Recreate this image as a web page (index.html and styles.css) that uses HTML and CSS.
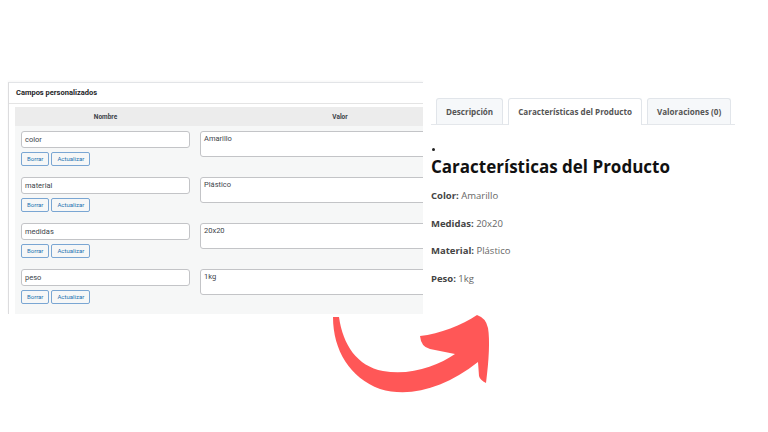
FILE: index.html
```html
<!DOCTYPE html>
<html lang="es">
<head>
    <meta charset="UTF-8">
    <meta name="viewport" content="width=device-width, initial-scale=1.0">
    <title>Campos personalizados</title>
    <link rel="stylesheet" href="styles.css">
</head>
<body>
    <div class="stage">
        <div class="admin">
            <div class="admin-head">Campos personalizados</div>
            <div class="admin-body">
                <table class="fields">
                    <thead>
                        <tr>
                            <th class="col-name">Nombre</th>
                            <th class="col-value">Valor</th>
                        </tr>
                    </thead>
                    <tbody>
                        <tr>
                            <td>
                                <div class="field-name">color</div>
                                <div class="actions">
                                    <span class="btn">Borrar</span>
                                    <span class="btn">Actualizar</span>
                                </div>
                            </td>
                            <td><div class="field-value">Amarillo</div></td>
                        </tr>
                        <tr>
                            <td>
                                <div class="field-name">material</div>
                                <div class="actions">
                                    <span class="btn">Borrar</span>
                                    <span class="btn">Actualizar</span>
                                </div>
                            </td>
                            <td><div class="field-value">Plástico</div></td>
                        </tr>
                        <tr>
                            <td>
                                <div class="field-name">medidas</div>
                                <div class="actions">
                                    <span class="btn">Borrar</span>
                                    <span class="btn">Actualizar</span>
                                </div>
                            </td>
                            <td><div class="field-value">20x20</div></td>
                        </tr>
                        <tr>
                            <td>
                                <div class="field-name">peso</div>
                                <div class="actions">
                                    <span class="btn">Borrar</span>
                                    <span class="btn">Actualizar</span>
                                </div>
                            </td>
                            <td><div class="field-value">1kg</div></td>
                        </tr>
                    </tbody>
                </table>
            </div>
        </div>

        <div class="product">
            <ul class="tabs">
                <li class="tab">Descripción</li>
                <li class="tab active">Características del Producto</li>
                <li class="tab">Valoraciones (0)</li>
            </ul>
            <div class="panel">
                <span class="dot"></span>
                <h2>Características del Producto</h2>
                <p><b>Color:</b> Amarillo</p>
                <p><b>Medidas:</b> 20x20</p>
                <p><b>Material:</b> Plástico</p>
                <p><b>Peso:</b> 1kg</p>
            </div>
        </div>

        <!-- red curved arrow -->
        <svg class="arrow" viewBox="330 312 165 88" width="165" height="88">
            <path fill="#ff5757" d="M333,317
                C333,350 350,378 380,389
                C410,398 445,388 478,362
                L479,376
                Q480,380 486,383
                C489,360 490,340 488,328
                Q486,318 477,315
                C462,325 440,334 420,336
                Q421,347 430,349
                L455,354
                C438,366 410,376 383,371
                C357,366 343,345 339,317 Z"/>
        </svg>
    </div>
</body>
</html>
```

FILE: styles.css
```css
body {
    margin: 0;
    background: #fff;
    font-family: Roboto, "Liberation Sans", sans-serif;
}
.stage {
    position: relative;
    width: 768px;
    height: 432px;
    padding-top: 82px;
    box-sizing: border-box;
    display: flex;
    align-items: flex-start;
}

/* left: admin custom fields box */
.admin {
    margin-left: 8px;
    width: 415px;
    height: 232px;
    border-left: 1px solid #dcdcde;
    border-top: 1px solid #e2e4e7;
    box-shadow: 0 -1px 2px rgba(0, 0, 0, 0.04);
    box-sizing: border-box;
    overflow: hidden;
    background: #fff;
}
.admin-head {
    height: 20px;
    line-height: 20px;
    padding-left: 7px;
    font-size: 7.5px;
    font-weight: 700;
    color: #1d2327;
    border-bottom: 1px solid #e4e4e4;
}
.admin-body {
    margin: 3px 0 0 6px;
    background: #f6f7f7;
    height: 207px;
    width: 480px;
}
.fields {
    width: 469px;
    table-layout: fixed;
    border-collapse: collapse;
}
.fields th {
    height: 19px;
    padding: 0;
    background: #ececec;
    font-size: 6.5px;
    font-weight: 700;
    color: #3c434a;
}
.fields th.col-name {
    width: 181px;
}
.fields td {
    vertical-align: top;
    padding: 11px 0 0 6px;
}
.fields td + td {
    padding-left: 4px;
}
.fields tbody tr:first-child td {
    padding-top: 5px;
}
.field-name {
    width: 169px;
    height: 17px;
    box-sizing: border-box;
    border: 1px solid #c3c4c7;
    border-radius: 3px;
    background: #fff;
    padding: 0 3px;
    line-height: 15px;
    font-size: 7.5px;
    color: #3c434a;
}
.field-value {
    height: 26px;
    box-sizing: border-box;
    border: 1px solid #c3c4c7;
    border-radius: 3px;
    background: #fff;
    padding: 2px 3px;
    font-size: 7.5px;
    color: #3c434a;
}
.actions {
    display: flex;
    gap: 2px;
    margin-top: 4px;
}
.btn {
    height: 14px;
    box-sizing: border-box;
    line-height: 12px;
    padding: 0 5px;
    border: 1px solid #7aa6d3;
    border-radius: 2px;
    background: #f6f7f7;
    font-size: 6px;
    color: #2271b1;
}

/* right: product tabs */
.product {
    flex: 1;
    height: 350px;
    background: #fff;
    padding: 16px 0 0 8px;
    font-family: "Open Sans", sans-serif;
}
.tabs {
    list-style: none;
    margin: 0;
    padding: 0 0 0 5px;
    width: 299px;
    display: flex;
    gap: 5px;
    border-bottom: 1px solid #e4e7eb;
}
.tab {
    height: 26px;
    box-sizing: border-box;
    line-height: 25px;
    padding: 0 9px;
    white-space: nowrap;
    border: 1px solid #e1e5ea;
    border-bottom: none;
    border-radius: 3px 3px 0 0;
    background: #f6f8fa;
    font-size: 8.1px;
    font-weight: 700;
    color: #555;
    margin-bottom: -1px;
}
.tab.active {
    background: #fff;
    height: 27px;
}
.panel {
    padding-top: 23px;
    color: #666;
}
.dot {
    display: block;
    width: 3px;
    height: 3px;
    margin-left: 1px;
    border-radius: 50%;
    background: #222;
}
.panel h2 {
    margin: 4px 0 11px;
    font-size: 17px;
    font-weight: 700;
    color: #111;
}
.panel p {
    margin: 0 0 13.6px;
    font-size: 9.5px;
    line-height: 14px;
}
.panel b {
    color: #444;
}

.arrow {
    position: absolute;
    left: 330px;
    top: 312px;
}
```
